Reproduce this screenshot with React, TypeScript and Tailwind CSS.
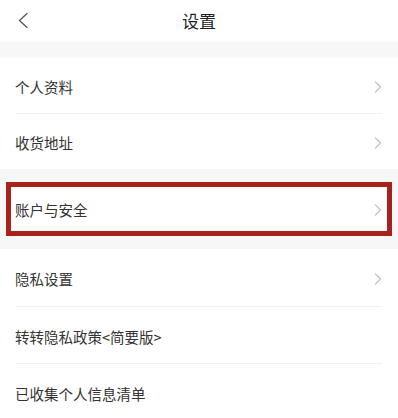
const font = { fontFamily: '"Noto Sans CJK SC", "Noto Sans", sans-serif' };

function Chevron() {
  return (
    <svg width="8" height="12" viewBox="0 0 8 12" fill="none" className="shrink-0">
      <path d="M1.5 1l5 5-5 5" stroke="#c2c2c2" strokeWidth="1.2" strokeLinecap="round" strokeLinejoin="round" />
    </svg>
  );
}

interface RowProps {
  label: string;
  arrow?: boolean;
  divider?: boolean;
  height?: string;
}

function Row({ label, arrow = true, divider = false, height = 'h-[56px]' }: RowProps) {
  return (
    <div className="bg-white pl-[15px] pr-[16px]">
      <div className={`flex items-center justify-between pt-[3px] ${height} ${divider ? 'border-b border-[#f1f1f1]' : ''}`}>
        <span className="text-[14.5px] text-[#333333]">{label}</span>
        {arrow && <Chevron />}
      </div>
    </div>
  );
}

export default function App() {
  return (
    <div className="h-[418px] w-[398px] overflow-hidden bg-white" style={font}>
      <div className="relative flex h-[42px] items-center justify-center bg-white">
        <svg width="12" height="17" viewBox="0 0 12 17" fill="none" className="absolute left-[17px] top-[12px]">
          <path d="M10 1.5L2.5 8.5l7.5 7" stroke="#555555" strokeWidth="1.3" strokeLinecap="round" strokeLinejoin="round" />
        </svg>
        <span className="text-[17px] text-[#222222]">设置</span>
      </div>
      <div className="h-[16px] bg-[#f7f7f7]" />
      <Row label="个人资料" divider height="h-[56px]" />
      <Row label="收货地址" height="h-[55px]" />
      <div className="bg-[#f7f7f7] px-[6px] py-[13px]">
        <div className="flex h-[54px] items-center justify-between border-[5px] border-[#a8221b] bg-white pl-[4px] pr-[5px] pt-[2px]">
          <span className="text-[14.5px] text-[#333333]">账户与安全</span>
          <Chevron />
        </div>
      </div>
      <Row label="隐私设置" divider height="h-[58px]" />
      <Row label="转转隐私政策<简要版>" arrow={false} divider height="h-[57px]" />
      <Row label="已收集个人信息清单" arrow={false} height="h-[57px]" />
    </div>
  );
}
